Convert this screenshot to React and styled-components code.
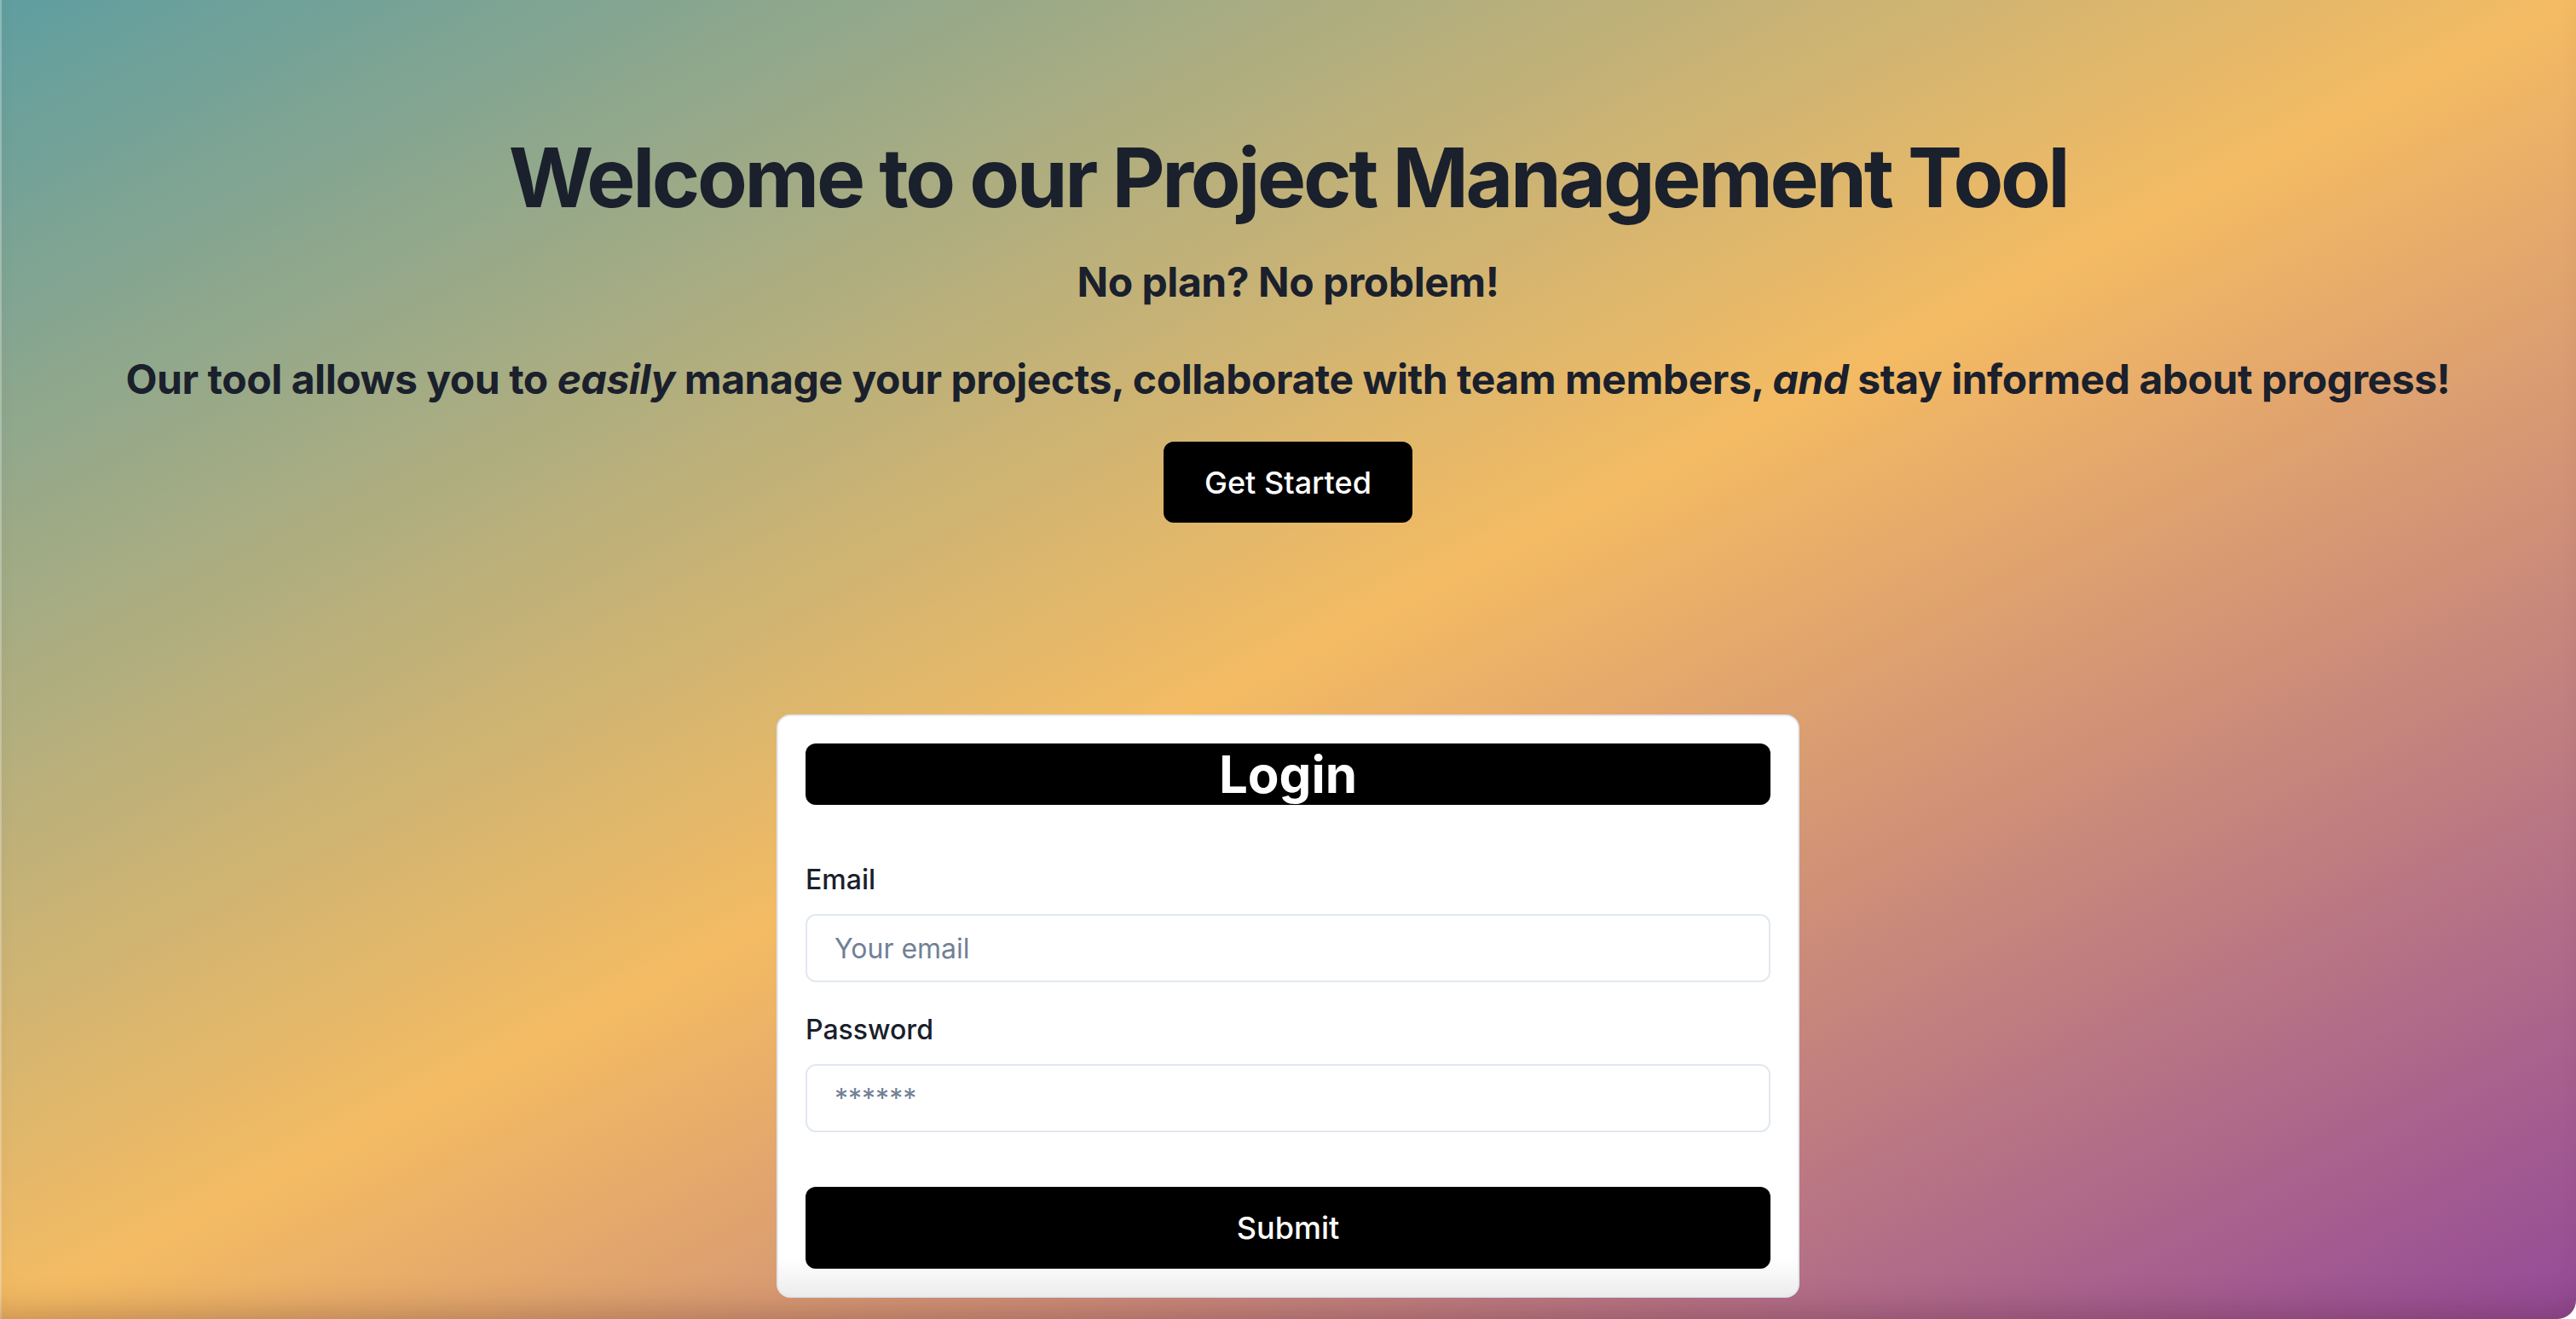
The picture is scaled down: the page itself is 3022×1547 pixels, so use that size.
import React from 'react';
import styled, { createGlobalStyle } from 'styled-components';

const GlobalStyle = createGlobalStyle`
  html, body {
    margin: 0;
    padding: 0;
  }
  body {
    font-family: Inter, "Noto Sans", "Liberation Sans", sans-serif;
    color: #1a202c;
  }
  * {
    box-sizing: border-box;
  }
`;

const Page = styled.div`
  min-height: 100vh;
  display: flex;
  flex-direction: column;
  align-items: center;
  padding-top: 151px;
  background: linear-gradient(to bottom right, #5f9ea0 0%, #f4bb63 50%, #944a98 100%);
  box-shadow: inset 0 -36px 40px -30px rgba(70, 25, 30, 0.3), inset 2px 0 0 rgba(255, 255, 255, 0.3);
  border-bottom-right-radius: 22px;
  overflow: hidden;
`;

const Hero = styled.section`
  display: flex;
  flex-direction: column;
  align-items: center;
  text-align: center;
`;

const Title = styled.h1`
  margin: 0;
  font-size: 96px;
  line-height: 1.2;
  font-weight: 700;
  letter-spacing: -3.3px;
  color: #1a202c;
`;

const Subtitle = styled.h2`
  margin: ${props => props.gap}px 0 0;
  font-size: 48px;
  line-height: 1.2;
  font-weight: 700;
  letter-spacing: -0.45px;
  color: #1a202c;

  em {
    font-style: italic;
  }
`;

const Button = styled.button`
  display: inline-flex;
  align-items: center;
  justify-content: center;
  height: ${props => props.full ? 96 : 95}px;
  width: ${props => props.full ? '100%' : 'auto'};
  padding: 0 48px;
  margin-top: ${props => props.gap || 0}px;
  border: none;
  border-radius: 12px;
  background: #000;
  color: #fff;
  font-family: inherit;
  font-size: 36px;
  font-weight: 500;
  cursor: pointer;
`;

const Card = styled.form`
  width: 1200px;
  margin-top: 225px;
  padding: 32px;
  border: 2px solid #e2e8f0;
  border-radius: 16px;
  background: linear-gradient(to bottom, #ffffff calc(100% - 44px), #ececec 100%);
  display: flex;
  flex-direction: column;
`;

const CardHeader = styled.h2`
  margin: 0 0 64px;
  height: 72px;
  line-height: 72px;
  border-radius: 12px;
  background: #000;
  color: #fff;
  text-align: center;
  font-size: 60px;
  font-weight: 700;
`;

const Field = styled.div`
  display: flex;
  flex-direction: column;
  margin-bottom: ${props => props.last ? 64 : 32}px;
`;

const Label = styled.label`
  margin-bottom: 16px;
  font-size: 32px;
  line-height: 48px;
  font-weight: 500;
  color: #1a202c;
`;

const Input = styled.input`
  height: 80px;
  padding: 0 32px;
  border: 2px solid #e2e8f0;
  border-radius: 12px;
  background: #fff;
  font-family: inherit;
  font-size: 32px;
  color: #1a202c;
  outline: none;

  &::placeholder {
    color: #718096;
  }
`;

export default function App() {
  return (
    <>
      <GlobalStyle />
      <Page>
        <Hero>
          <Title>Welcome to our Project Management Tool</Title>
          <Subtitle gap={36}>No plan? No problem!</Subtitle>
          <Subtitle gap={56}>
            Our tool allows you to <em>easily</em> manage your projects, collaborate with team members, <em>and</em> stay informed about progress!
          </Subtitle>
          <Button type="button" gap={45}>Get Started</Button>
        </Hero>
        <Card onSubmit={e => e.preventDefault()}>
          <CardHeader>Login</CardHeader>
          <Field>
            <Label htmlFor="email">Email</Label>
            <Input id="email" type="email" placeholder="Your email" />
          </Field>
          <Field last>
            <Label htmlFor="password">Password</Label>
            <Input id="password" type="password" placeholder="******" />
          </Field>
          <Button type="submit" full>Submit</Button>
        </Card>
      </Page>
    </>
  );
}
